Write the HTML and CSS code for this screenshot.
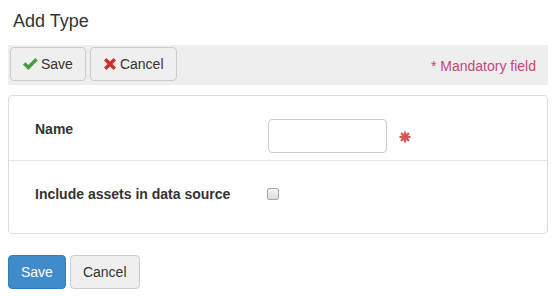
FILE: index.html
```html
<!DOCTYPE html>
<html lang="en">
<head>
    <meta charset="UTF-8">
    <meta name="viewport" content="width=device-width, initial-scale=1.0">
    <title>Add Type</title>
    <link rel="stylesheet" href="styles.css">
</head>
<body>

    <h1 class="page-title">Add Type</h1>

    <div class="toolbar">
        <div class="toolbar-buttons">
            <button type="button" class="btn">
                <svg class="icon" width="15" height="12" viewBox="0 0 15 12"><path d="M0 6.6 L2.4 4.2 L5.3 7.1 L12.3 0.1 L14.7 2.5 L5.3 11.9 Z" fill="#449d44"/></svg>
                Save
            </button>
            <button type="button" class="btn">
                <svg class="icon" width="14" height="12" viewBox="0 0 14 12"><path d="M1 2.4 L3.4 0 L7 3.6 L10.6 0 L13 2.4 L9.4 6 L13 9.6 L10.6 12 L7 8.4 L3.4 12 L1 9.6 L4.6 6 Z" fill="#c9302c"/></svg>
                Cancel
            </button>
        </div>
        <span class="mandatory">* Mandatory field</span>
    </div>

    <form class="panel">
        <div class="form-row">
            <label class="form-label" for="typeName">Name</label>
            <div class="form-control-wrap">
                <input type="text" id="typeName" class="text-input">
                <svg class="required" width="12" height="12" viewBox="0 0 12 12">
                    <g stroke="#d9534f" stroke-width="2.2">
                        <line x1="6" y1="0.5" x2="6" y2="11.5"/>
                        <line x1="0.5" y1="6" x2="11.5" y2="6"/>
                        <line x1="2.1" y1="2.1" x2="9.9" y2="9.9"/>
                        <line x1="9.9" y1="2.1" x2="2.1" y2="9.9"/>
                    </g>
                </svg>
            </div>
        </div>
        <div class="form-row form-row-last">
            <label class="form-label" for="includeAssets">Include assets in data source</label>
            <div class="form-control-wrap">
                <input type="checkbox" id="includeAssets" class="check">
            </div>
        </div>
    </form>

    <div class="actions">
        <button type="button" class="btn btn-primary">Save</button>
        <button type="button" class="btn">Cancel</button>
    </div>

</body>
</html>
```

FILE: styles.css
```css
body {
    font-family: "Liberation Sans", Arial, sans-serif;
    font-size: 14px;
    line-height: 20px;
    color: #333;
    margin: 0 6px 0 8px;
}
.page-title {
    font-size: 18px;
    font-weight: normal;
    line-height: 20px;
    margin: 0;
    padding: 11px 0 14px 5px;
}
.toolbar {
    display: flex;
    justify-content: space-between;
    align-items: flex-start;
    height: 40px;
    box-sizing: border-box;
    padding: 2px 12px 0 2px;
    background: #eee;
}
.toolbar-buttons {
    display: flex;
    gap: 4px;
}
.mandatory {
    color: #c2477a;
    margin-top: 9px;
}
.btn {
    font-family: inherit;
    font-size: 14px;
    line-height: 20px;
    color: #333;
    background: #efefef;
    border: 1px solid #ccc;
    border-radius: 4px;
    padding: 6px 12px;
    display: inline-flex;
    align-items: center;
    gap: 3px;
}
.btn-primary {
    color: #fff;
    background: #428bca;
    border-color: #357ebd;
}
.icon {
    display: block;
}
.panel {
    margin: 10px 0 0;
    border: 1px solid #ddd;
    border-radius: 4px;
}
.form-row {
    display: grid;
    grid-template-columns: 233px 1fr;
    padding: 23px 26px 7px;
    border-bottom: 1px solid #e5e5e5;
}
.form-row-last {
    border-bottom: none;
    padding-bottom: 29px;
}
.form-label {
    font-weight: bold;
}
.form-control-wrap {
    display: flex;
    align-items: center;
    gap: 12px;
}
.text-input {
    width: 119px;
    height: 34px;
    box-sizing: border-box;
    border: 1px solid #ccc;
    border-radius: 4px;
    padding: 6px 12px;
    font: inherit;
}
.required {
    display: block;
    margin-top: 1px;
}
.check {
    appearance: none;
    width: 12px;
    height: 12px;
    margin: 0 0 0 -1px;
    border: 1px solid #a8a8a8;
    border-radius: 2px;
    background: linear-gradient(#f4f4f4, #dcdcdc);
}
.actions {
    display: flex;
    gap: 4px;
    margin-top: 21px;
}
```
